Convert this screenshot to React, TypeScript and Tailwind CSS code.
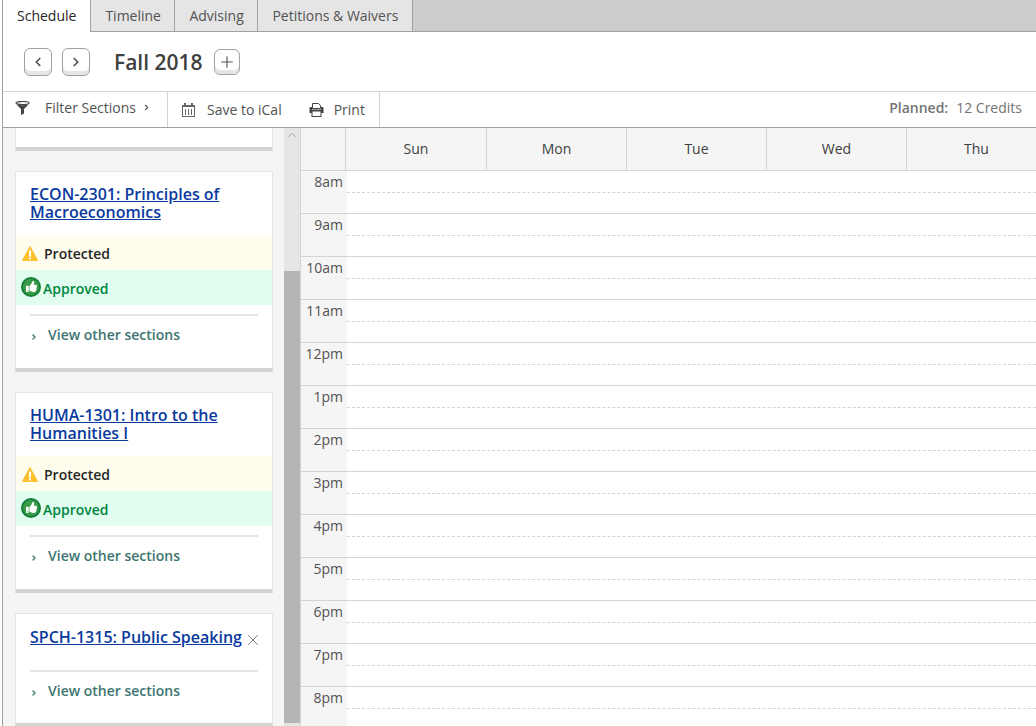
import { ChevronLeft, ChevronRight, ChevronUp, Plus, X } from 'lucide-react';
import { FaThumbsUp } from 'react-icons/fa';

const DAYS = ['Mon', 'Tue', 'Wed', 'Thu'];
const HOURS = ['8am', '9am', '10am', '11am', '12pm', '1pm', '2pm', '3pm', '4pm', '5pm', '6pm', '7pm', '8pm'];

function IconButton({ children, small }: { children: React.ReactNode; small?: boolean }) {
  return (
    <button
      className={`flex items-center justify-center rounded-md border border-neutral-400 bg-white text-neutral-600 shadow-[inset_0_-4px_0_#e5e5e5] ${
        small ? 'size-6.5' : 'size-7'
      }`}
    >
      {children}
    </button>
  );
}

function FunnelIcon() {
  return (
    <svg width="15" height="14" viewBox="0 0 15 14" className="shrink-0">
      <ellipse cx="7.5" cy="2" rx="6.5" ry="1.5" fill="#fff" stroke="#444" strokeWidth="1.2" />
      <path d="M1.5 3.5 6 8v6l3-1.5V8l4.5-4.5C10 4.6 5 4.6 1.5 3.5Z" fill="#444" />
    </svg>
  );
}

function CalendarIcon() {
  return (
    <svg width="14" height="14" viewBox="0 0 14 14" fill="none" stroke="#666" className="shrink-0">
      <rect x="0.5" y="3.5" width="12" height="10" />
      <path d="M0 3h13" strokeWidth="2" />
      <path d="M3 0v3M10 0v3" strokeWidth="2" />
      <path d="M3.5 6v6M6.5 6v6M9.5 6v6" />
    </svg>
  );
}

function PrinterIcon() {
  return (
    <svg width="15" height="14" viewBox="0 0 15 14" className="shrink-0">
      <path d="M3.5 0.5h6l2 2v3h-8Z" fill="#fff" stroke="#444" />
      <path d="M1.5 4H3v2.5h9V4h1.5a1 1 0 0 1 1 1v5h-14V5a1 1 0 0 1 1-1Z" fill="#444" />
      <rect x="3" y="8" width="9" height="5.5" fill="#fff" stroke="#444" />
    </svg>
  );
}

function WarningIcon() {
  return (
    <svg width="16" height="15" viewBox="0 0 16 15" className="shrink-0">
      <path d="M8 0.5 15.6 14.5H0.4Z" fill="#fdc02f" stroke="#fdc02f" strokeLinejoin="round" />
      <rect x="7" y="4.5" width="2" height="6" fill="#fff" />
      <rect x="7" y="11.5" width="2" height="2" fill="#fff" />
    </svg>
  );
}

function ViewSections() {
  return (
    <div className="flex items-center pl-3.5 text-sm font-semibold text-[#3d7570]">
      <ChevronRight size={8} strokeWidth={4} className="mt-1 mr-2.5" />
      View other sections
    </div>
  );
}

function CourseCard({ title }: { title: string }) {
  return (
    <div className="w-[258px] border border-b-4 border-neutral-200 border-b-neutral-300 bg-white">
      <div className="px-3.5 pt-3.25 pb-3.5 leading-[18px]">
        <a className="font-semibold text-[#0a3a9e] underline">{title}</a>
      </div>
      <div className="flex h-[35px] items-center gap-1.5 bg-[#fffeee] pt-0.5 pl-1.5 text-sm font-semibold text-neutral-800">
        <WarningIcon />
        Protected
      </div>
      <div className="flex h-[35px] items-center gap-0.5 bg-[#e0fdf0] pt-0.5 pl-1.25 text-sm font-semibold text-[#00853e]">
        <span className="mb-1 flex size-5 shrink-0 items-center justify-center rounded-full border-2 border-[#16803a] bg-[#3a9b4a] text-white">
          <FaThumbsUp size={11} />
        </span>
        Approved
      </div>
      <div className="mx-3.5 mt-2.25 mb-2.25 border-t-2 border-neutral-200" />
      <ViewSections />
      <div className="h-5.75" />
    </div>
  );
}

function Sidebar() {
  return (
    <div className="flex w-[298px] shrink-0 border-r border-neutral-300 bg-neutral-100">
      <div className="flex min-w-0 flex-1 flex-col gap-5 overflow-hidden pl-3">
        <div className="h-5.75 w-[258px] shrink-0 border-x border-b-4 border-neutral-200 border-b-neutral-300 bg-white" />
        <CourseCard title="ECON-2301: Principles of Macroeconomics" />
        <CourseCard title="HUMA-1301: Intro to the Humanities I" />
        <div className="h-[114px] w-[258px] shrink-0 border border-b-4 border-neutral-200 border-b-neutral-300 bg-white">
          <div className="flex items-center px-3.5 pt-3.5 pb-3.5 leading-[18px]">
            <a className="font-semibold whitespace-nowrap text-[#0a3a9e] underline">SPCH-1315: Public Speaking</a>
            <X size={18} strokeWidth={1.25} className="-my-1 ml-0.5 mt-0.5 shrink-0 text-neutral-500" />
          </div>
          <div className="mx-3.5 mt-2.5 mb-2.25 border-t-2 border-neutral-200" />
          <ViewSections />
        </div>
      </div>
      <div className="flex w-4 shrink-0 flex-col bg-neutral-200">
        <ChevronUp size={14} strokeWidth={1} className="mx-auto text-neutral-500" />
        <div className="mt-[129px] h-[452px] bg-[#b5b5b5]" />
      </div>
    </div>
  );
}

function Calendar() {
  return (
    <div className="min-w-0 flex-1 overflow-hidden">
      <div className="flex h-[43px] border-b border-neutral-300 bg-neutral-100 text-sm text-neutral-700">
        <div className="w-11 shrink-0" />
        <div className="flex w-[141px] shrink-0 items-center justify-center border-l border-neutral-300">Sun</div>
        {DAYS.map((day) => (
          <div key={day} className="flex w-35 shrink-0 items-center justify-center border-l border-neutral-300">
            {day}
          </div>
        ))}
      </div>
      {HOURS.map((hour) => (
        <div key={hour} className="flex h-[43px] border-b border-neutral-300">
          <div className="w-11.5 shrink-0 bg-neutral-100 pt-px pr-1 text-right text-sm text-neutral-600">{hour}</div>
          <div className="h-[22px] flex-1 border-b border-dashed border-neutral-300" />
        </div>
      ))}
    </div>
  );
}

export default function App() {
  return (
    <div className="h-screen overflow-hidden bg-white pl-0.5 font-['Open_Sans',sans-serif]">
      <div className="flex h-full flex-col border-l border-neutral-400">
        <div className="flex h-8 shrink-0 bg-[#cccccc] text-sm whitespace-nowrap">
          <div className="flex items-center border-r border-neutral-400 bg-white px-3.5 text-neutral-800">Schedule</div>
          <div className="flex w-21 items-center border-r border-b border-neutral-400 bg-neutral-200 pl-3.5 text-neutral-600">
            Timeline
          </div>
          <div className="flex w-20.75 items-center border-r border-b border-neutral-400 bg-neutral-200 pl-3.5 text-neutral-600">
            Advising
          </div>
          <div className="flex items-center border-r border-b border-neutral-400 bg-neutral-200 px-3.5 text-neutral-600">
            Petitions &amp; Waivers
          </div>
          <div className="flex-1 border-b border-neutral-400" />
        </div>

        <div className="flex h-15 shrink-0 items-center border-b border-neutral-300 pl-[21px]">
          <div className="flex gap-2.5">
            <IconButton>
              <ChevronLeft size={14} strokeWidth={3} />
            </IconButton>
            <IconButton>
              <ChevronRight size={14} strokeWidth={3} />
            </IconButton>
          </div>
          <h1 className="mt-0.5 ml-6 text-[21px] font-semibold text-neutral-700">Fall 2018</h1>
          <div className="ml-2.75">
            <IconButton small>
              <Plus size={18} strokeWidth={1.5} />
            </IconButton>
          </div>
        </div>

        <div className="flex h-9 shrink-0 items-stretch border-b border-neutral-400 text-sm text-neutral-600">
          <div className="flex w-[165px] items-center border-r border-neutral-300 pb-1 pl-3">
            <FunnelIcon />
            <span className="ml-3.75">Filter Sections</span>
            <ChevronRight size={9} strokeWidth={3} className="ml-1.5" />
          </div>
          <div className="flex items-center border-r border-neutral-300 px-3.5">
            <CalendarIcon />
            <span className="ml-2.75">Save to iCal</span>
            <span className="ml-6.75">
              <PrinterIcon />
            </span>
            <span className="ml-2.5">Print</span>
          </div>
          <div className="flex flex-1 items-center justify-end gap-2 pr-3.5 pb-1 text-neutral-500">
            <span className="font-semibold">Planned:</span>
            <span>12 Credits</span>
          </div>
        </div>

        <div className="flex min-h-0 flex-1">
          <Sidebar />
          <Calendar />
        </div>
      </div>
    </div>
  );
}
